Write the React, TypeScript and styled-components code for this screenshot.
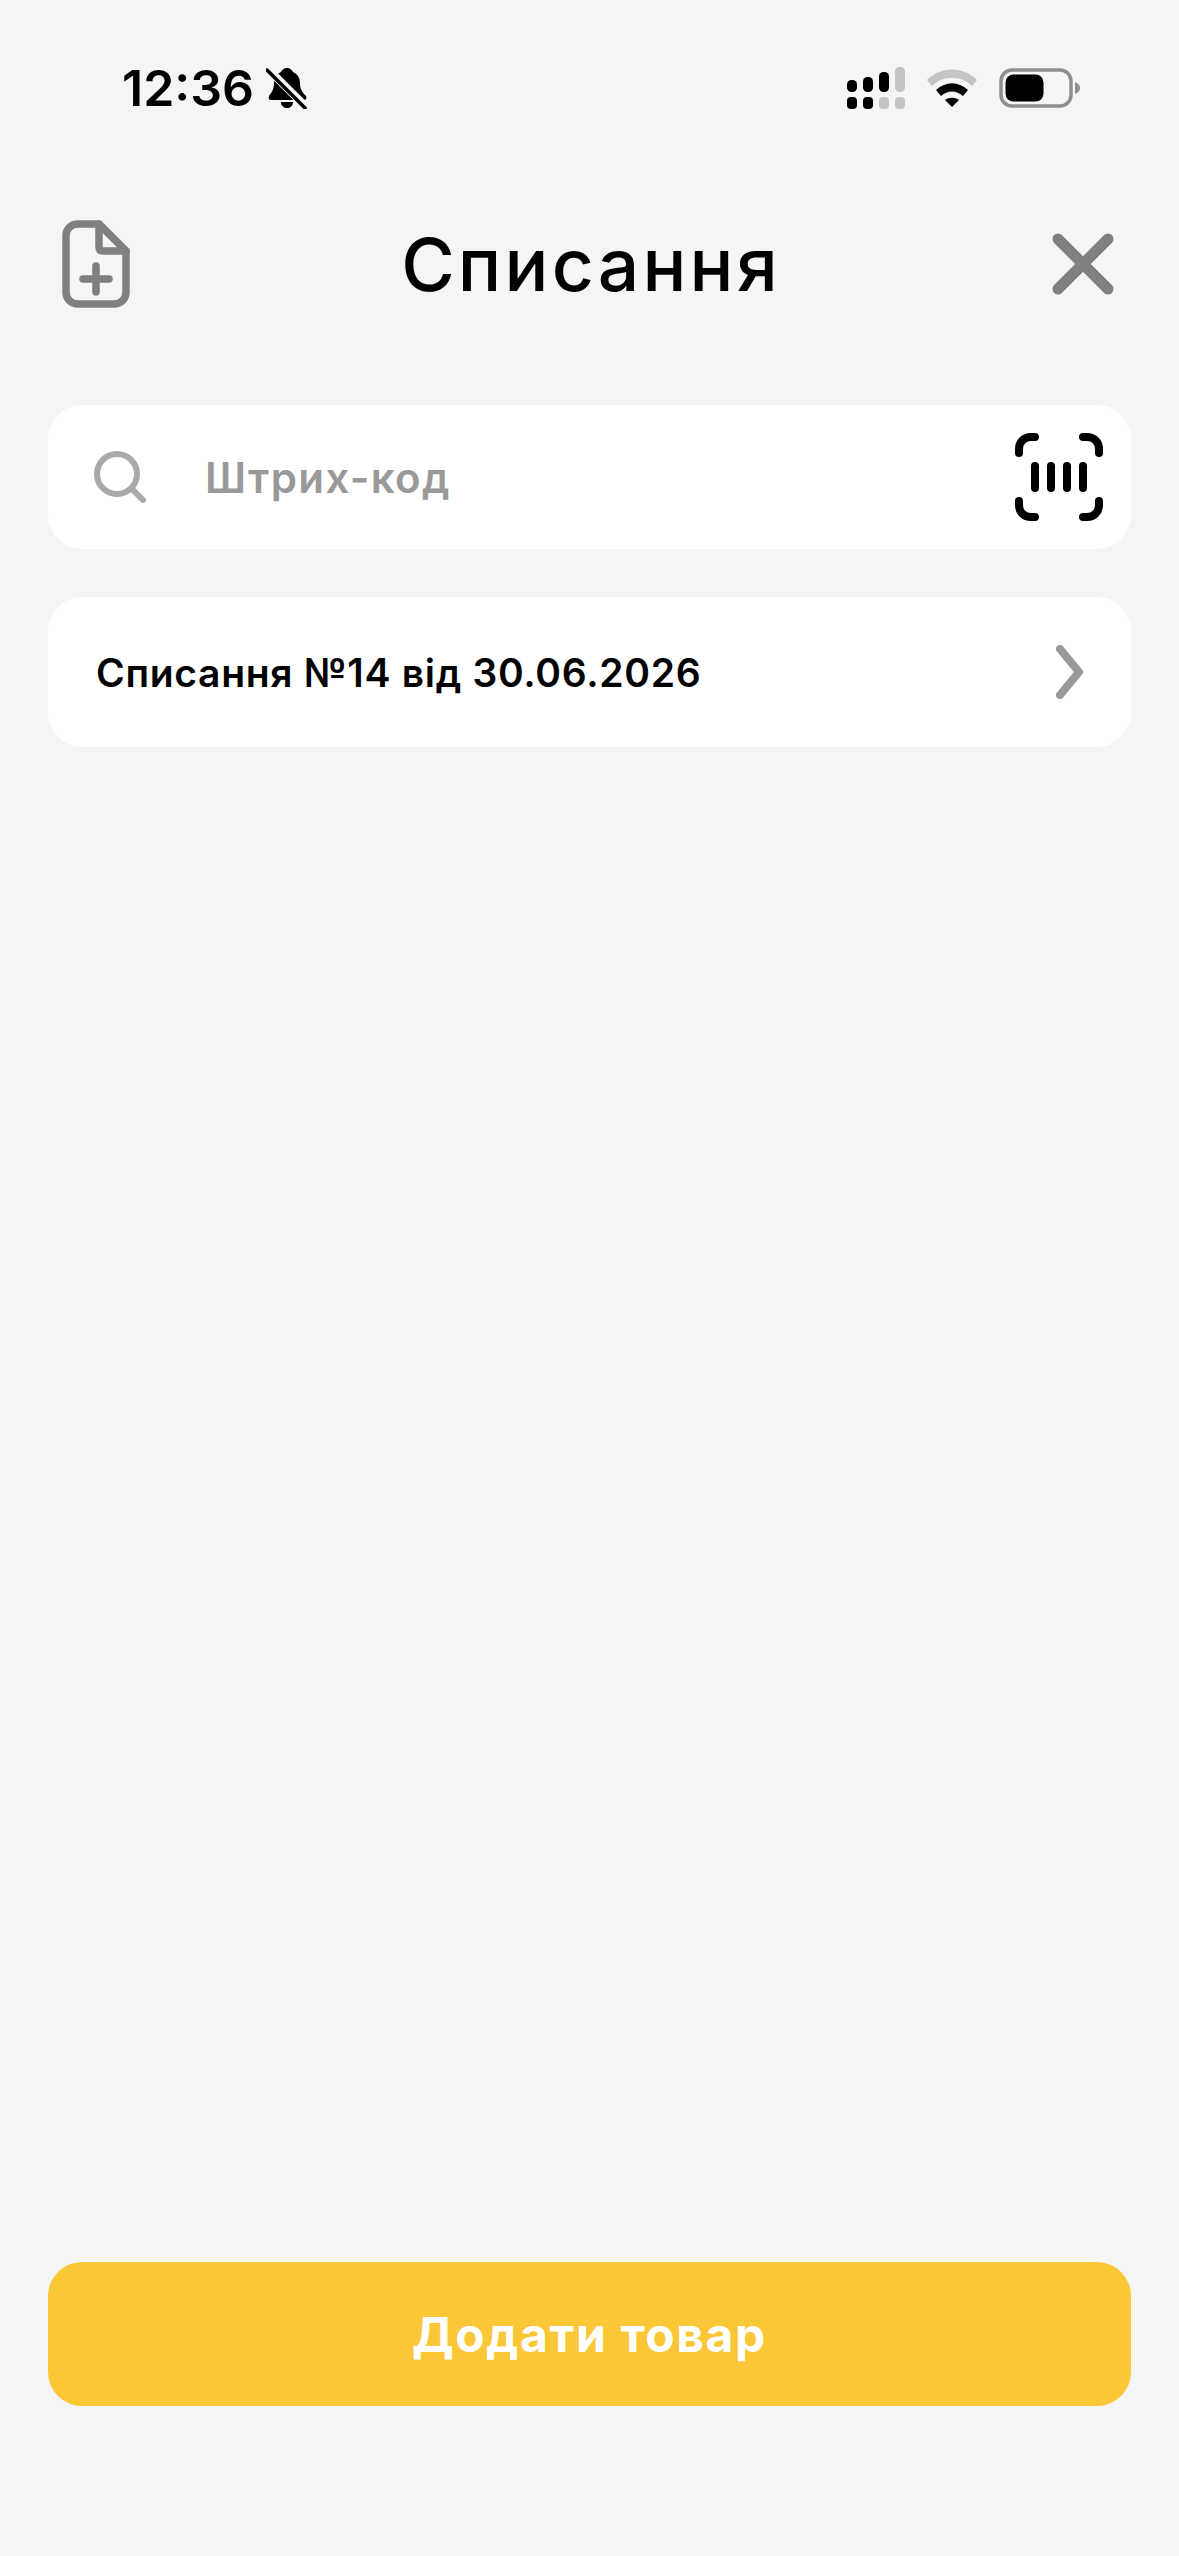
import styled, { createGlobalStyle } from "styled-components";

const GlobalStyle = createGlobalStyle`
  html, body {
    margin: 0;
    padding: 0;
    background: #f5f5f5;
  }
  * {
    box-sizing: border-box;
  }
`;

const Screen = styled.div`
  width: 1179px;
  height: 2556px;
  display: flex;
  flex-direction: column;
  background: #f5f5f5;
  font-family: Inter, "Noto Sans", sans-serif;
  overflow: hidden;
`;

const StatusBar = styled.div`
  height: 88px;
  margin-top: 44px;
  padding: 0 98px 0 122px;
  display: flex;
  align-items: center;
  justify-content: space-between;
`;

const TimeGroup = styled.div`
  display: flex;
  align-items: center;
  gap: 12px;
`;

const Time = styled.span`
  font-size: 50px;
  font-weight: 600;
  line-height: 1;
  color: #000;
`;

const Indicators = styled.div`
  display: flex;
  align-items: center;
  gap: 22px;
`;

const Header = styled.header`
  height: 88px;
  margin-top: 88px;
  padding: 0 65px 0 62px;
  display: flex;
  align-items: center;
  justify-content: space-between;
`;

const Title = styled.h1`
  margin: 0;
  font-size: 73px;
  font-weight: 500;
  letter-spacing: 3.2px;
  line-height: 1;
  color: #000;
`;

const Content = styled.main`
  flex: 1;
  padding: 0 48px;
  margin-top: 97px;
  display: flex;
  flex-direction: column;
  gap: 48px;
`;

const SearchCard = styled.div`
  height: 144px;
  padding: 0 28px 0 46px;
  border-radius: 34px;
  background: #fff;
  display: flex;
  align-items: center;
`;

const Placeholder = styled.span`
  flex: 1;
  margin-left: 59px;
  font-size: 42px;
  font-weight: 600;
  letter-spacing: 1.4px;
  color: #999;
`;

const ListCard = styled.div`
  height: 150px;
  padding: 0 48px;
  border-radius: 34px;
  background: #fff;
  display: flex;
  align-items: center;
  justify-content: space-between;
`;

const ListLabel = styled.span`
  font-size: 39px;
  font-weight: 600;
  letter-spacing: 0.7px;
  color: #000;
`;

const PrimaryButton = styled.button`
  height: 144px;
  margin: 0 48px 150px;
  border: none;
  border-radius: 34px;
  background: #fbc737;
  color: #fff;
  font-family: inherit;
  font-size: 48px;
  font-weight: 700;
  letter-spacing: 1.6px;
`;

function MutedBell() {
  return (
    <svg width="42" height="42" viewBox="0 0 42 42">
      <path
        d="M21 1c3 0 5 2 6 4 5 2 7 7 7 11 0 6 2 9 6 13 1 2 0 4-2 4H5c-2 0-3-2-2-4 3-4 5-7 5-13 0-4 2-9 7-11 1-2 3-4 6-4z"
        fill="#000"
      />
      <path d="M15 35h12c0 4-3 6-6 6s-6-2-6-6z" fill="#000" />
      <path d="M2 2l38 38" stroke="#f5f5f5" strokeWidth="8" />
      <path d="M1 3l38 38" stroke="#000" strokeWidth="3.5" strokeLinecap="round" />
    </svg>
  );
}

function CellularIcon() {
  return (
    <svg width="58" height="42" viewBox="0 0 58 42">
      <rect x="0" y="13" width="10" height="12" rx="4.5" fill="#000" />
      <rect x="16" y="10" width="10" height="15" rx="4.5" fill="#000" />
      <rect x="32" y="5" width="10" height="20" rx="4.5" fill="#000" />
      <rect x="48" y="0" width="10" height="25" rx="4.5" fill="#c4c4c4" />
      <rect x="0" y="30" width="10" height="12" rx="4" fill="#000" />
      <rect x="16" y="30" width="10" height="12" rx="4" fill="#000" />
      <rect x="32" y="30" width="10" height="12" rx="4" fill="#c4c4c4" />
      <rect x="48" y="30" width="10" height="12" rx="4" fill="#c4c4c4" />
    </svg>
  );
}

function WifiIcon() {
  return (
    <svg width="50" height="38" viewBox="0 0 50 38">
      <path d="M0 11C14-3 36-3 50 11l-5 6C34 6 16 6 5 17z" fill="#c4c4c4" />
      <path d="M9 21c10-9 22-9 32 0l-5 6c-7-6-15-6-22 0z" fill="#000" />
      <path d="M18 31c4-3 10-3 14 0l-7 7z" fill="#000" />
    </svg>
  );
}

function BatteryIcon() {
  return (
    <svg width="82" height="40" viewBox="0 0 82 40">
      <rect x="2" y="2" width="70" height="36" rx="11" fill="none" stroke="#8e8e8e" strokeWidth="3.5" />
      <rect x="6.5" y="6.5" width="38" height="27" rx="8" fill="#000" />
      <path d="M76 14c3 1 5 3 5 6s-2 5-5 6z" fill="#8e8e8e" />
    </svg>
  );
}

function NewDocIcon() {
  return (
    <svg width="68" height="88" viewBox="0 0 68 88" fill="none" stroke="#808080" strokeWidth="7.5" strokeLinecap="round" strokeLinejoin="round">
      <path d="M37 4H16C9 4 4 9 4 16v56c0 7 5 12 12 12h36c7 0 12-5 12-12V31z" />
      <path d="M37 4v23c0 3 1 4 4 4h23" />
      <path d="M34 46v26M21 59h26" />
    </svg>
  );
}

function CloseIcon() {
  return (
    <svg width="62" height="62" viewBox="0 0 62 62" fill="none" stroke="#808080" strokeWidth="11" strokeLinecap="round">
      <path d="M6 6l50 50M56 6L6 56" />
    </svg>
  );
}

function SearchIcon() {
  return (
    <svg width="52" height="52" viewBox="0 0 52 52" fill="none" stroke="#a9a9a9" strokeWidth="6" strokeLinecap="round">
      <circle cx="23" cy="23" r="20" />
      <path d="M38 38l11 11" />
    </svg>
  );
}

function BarcodeIcon() {
  return (
    <svg width="88" height="88" viewBox="0 0 88 88" fill="none" stroke="#000" strokeWidth="8" strokeLinecap="round">
      <path d="M4 20v-4C4 9 9 4 16 4h4M68 4h4c7 0 12 5 12 12v4M84 68v4c0 7-5 12-12 12h-4M20 84h-4C9 84 4 79 4 72v-4" />
      <path d="M20 33v22M36 33v22M52 33v22M68 33v22" />
    </svg>
  );
}

function ChevronIcon() {
  return (
    <svg width="27" height="54" viewBox="0 0 27 54" fill="none" stroke="#999" strokeWidth="8" strokeLinecap="round" strokeLinejoin="round">
      <path d="M4 4l19 23L4 50" />
    </svg>
  );
}

export default function App() {
  return (
    <>
      <GlobalStyle />
      <Screen>
        <StatusBar>
          <TimeGroup>
            <Time>12:36</Time>
            <MutedBell />
          </TimeGroup>
          <Indicators>
            <CellularIcon />
            <WifiIcon />
            <BatteryIcon />
          </Indicators>
        </StatusBar>
        <Header>
          <NewDocIcon />
          <Title>Списання</Title>
          <CloseIcon />
        </Header>
        <Content>
          <SearchCard>
            <SearchIcon />
            <Placeholder>Штрих-код</Placeholder>
            <BarcodeIcon />
          </SearchCard>
          <ListCard>
            <ListLabel>Списання №14 від 30.06.2026</ListLabel>
            <ChevronIcon />
          </ListCard>
        </Content>
        <PrimaryButton>Додати товар</PrimaryButton>
      </Screen>
    </>
  );
}
